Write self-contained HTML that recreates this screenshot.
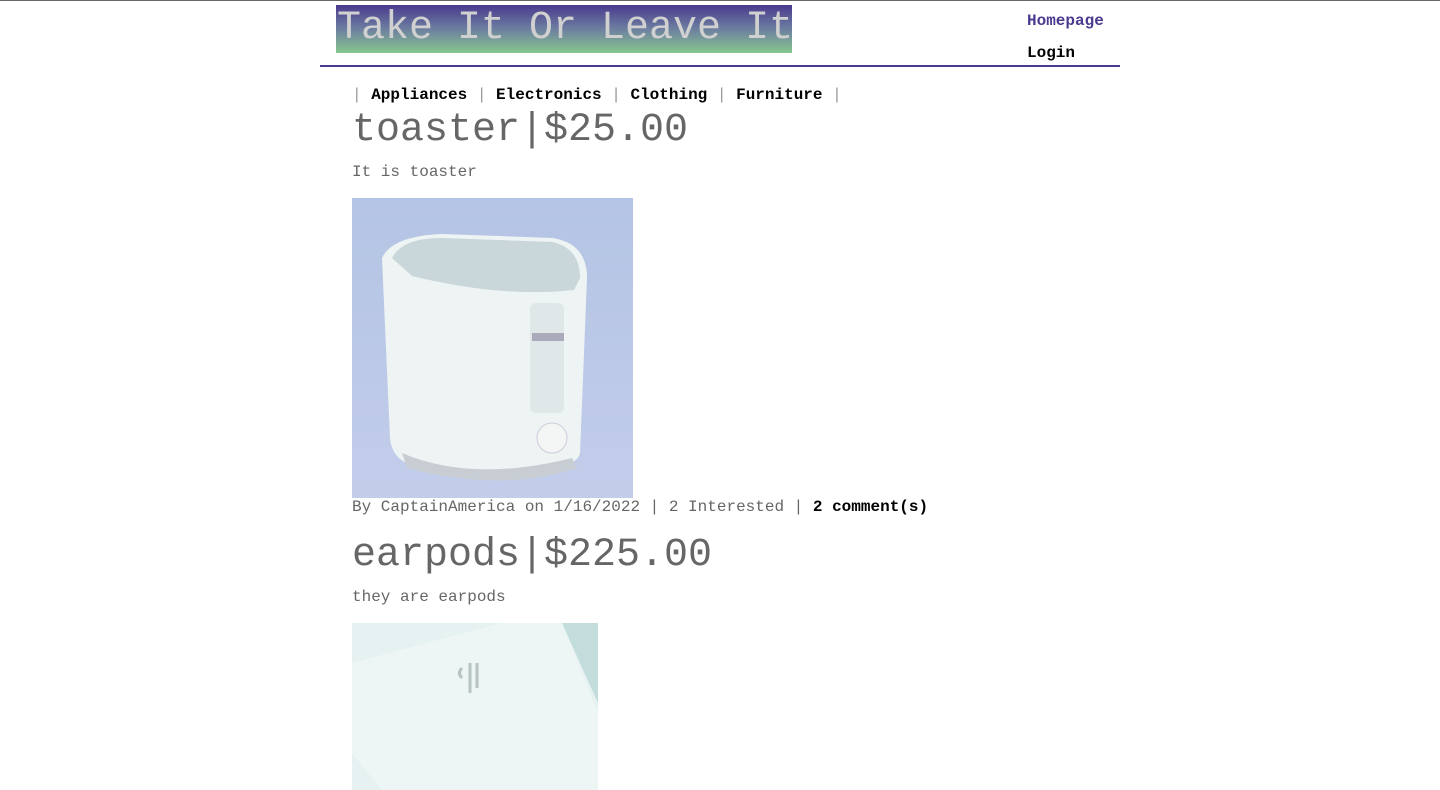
<!DOCTYPE html>
<html><head><style>
html,body{margin:0;padding:0;background:#fff;width:1440px;height:790px;overflow:hidden;font-family:"Liberation Mono",monospace;}
.topline{position:absolute;left:0;top:0;width:1440px;height:1px;background:#666;}
.logo{position:absolute;left:336px;top:5px;width:456px;height:48px;background:linear-gradient(#4a3a8e,#6d7fa0 50%,#85c78f);color:#d0d0d0;font-size:40px;line-height:48px;white-space:nowrap;padding-left:1px;box-sizing:border-box;}
.nav a{position:absolute;font-size:16px;font-weight:bold;text-decoration:none;}
.hr{position:absolute;left:320px;top:65px;width:800px;height:2px;background:#4b3a8f;}
.cats{position:absolute;left:352px;top:86px;font-size:16px;line-height:18px;color:#999;white-space:pre;}
.cats b{color:#000;}
.t{position:absolute;left:352px;font-size:40px;color:#666;line-height:44px;white-space:pre;}
.d{position:absolute;left:352px;font-size:16px;color:#666;line-height:18px;white-space:pre;}
.d b{color:#000;}
</style></head><body>
<div class="topline"></div>
<div class="logo">Take It Or Leave It</div>
<div class="nav"><a style="left:1027px;top:12px;color:#4b3a8f">Homepage</a><a style="left:1027px;top:44px;color:#000">Login</a></div>
<div class="hr"></div>
<div class="cats">| <b>Appliances</b> | <b>Electronics</b> | <b>Clothing</b> | <b>Furniture</b> |</div>
<div class="t" style="top:109px">toaster|$25.00</div>
<div class="d" style="top:163px">It is toaster</div>
<svg style="position:absolute;left:352px;top:198px" width="281" height="300" viewBox="0 0 281 300">
<defs><linearGradient id="bg" x1="0" y1="0" x2="0" y2="1"><stop offset="0" stop-color="#b4c4e4"/><stop offset="1" stop-color="#c2cdea"/></linearGradient></defs>
<rect width="281" height="300" fill="url(#bg)"/>
<path d="M30 60 Q40 38 90 36 L200 40 Q235 45 235 80 L228 255 Q225 270 180 275 L70 270 Q40 265 38 240 Z" fill="#eef3f3"/>
<path d="M40 60 Q50 40 90 40 L200 44 Q228 50 228 80 L222 92 Q150 100 60 78 Z" fill="#c9d6da"/>
<rect x="178" y="105" width="34" height="110" rx="6" fill="#dfe7e8"/>
<rect x="180" y="135" width="32" height="8" fill="#aab"/>
<circle cx="200" cy="240" r="15" fill="#f4f6f6" stroke="#ccd" />
<path d="M50 255 Q120 285 220 260 L225 270 Q150 295 55 270 Z" fill="#c8cdd3"/>
</svg>
<div class="d" style="top:498px">By CaptainAmerica on 1/16/2022 | 2 Interested | <b>2 comment(s)</b></div>
<div class="t" style="top:534px">earpods|$225.00</div>
<div class="d" style="top:588px">they are earpods</div>
<svg style="position:absolute;left:352px;top:623px" width="246" height="167" viewBox="0 0 246 167">
<rect width="246" height="167" fill="#c3dcdc"/>
<path d="M0 0 L210 0 L246 80 L246 167 L0 167 Z" fill="#e6f2f2"/>
<path d="M0 40 L150 0 L210 0 L246 90 L246 167 L30 167 L0 130 Z" fill="#edf6f5"/>
<path d="M110 45 q-5 5 0 10 M118 40 v30 M125 40 v25" stroke="#b8c4c4" stroke-width="3" fill="none"/>
</svg>
</body></html>
